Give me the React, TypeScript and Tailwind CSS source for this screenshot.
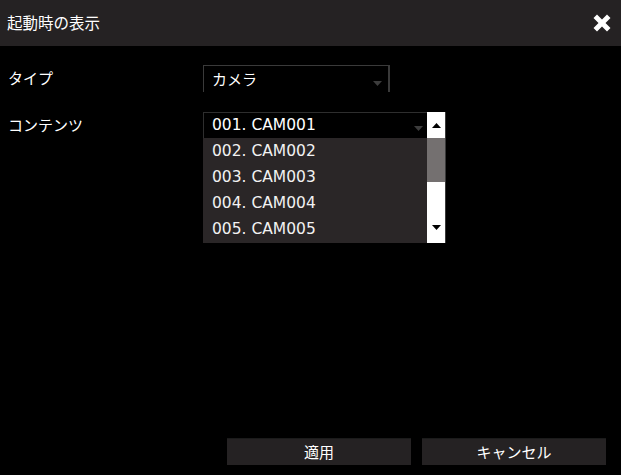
const jp = "font-['Noto_Sans_CJK_JP','Noto_Sans',sans-serif]";
const latin = "font-['DejaVu_Sans','Noto_Sans_CJK_JP',sans-serif]";

const ITEMS = ["002. CAM002", "003. CAM003", "004. CAM004", "005. CAM005"];

function Caret({ className }: { className: string }) {
  return (
    <svg width="9" height="5" viewBox="0 0 9 5" className={className}>
      <path d="M0 0h9L4.5 5z" fill="currentColor" />
    </svg>
  );
}

function CloseIcon() {
  return (
    <svg width="18" height="18" viewBox="0 0 18 18">
      <path
        d="M4 0.5 9 5.5 14 0.5 17.5 4 12.5 9 17.5 14 14 17.5 9 12.5 4 17.5 0.5 14 5.5 9 0.5 4z"
        fill="#fff"
      />
    </svg>
  );
}

export default function App() {
  return (
    <div className={`w-[621px] h-[475px] bg-black flex flex-col text-white ${jp}`}>
      <div className="h-[46px] bg-[#252223] flex items-center justify-between pl-[7px] pr-[10px]">
        <span className="text-[15.5px]">起動時の表示</span>
        <CloseIcon />
      </div>

      <div className="flex-1 flex flex-col pt-[19px] pl-[8px]">
        <div className="flex items-start">
          <div className="w-[195px] h-[27px] flex items-center text-[15px]">タイプ</div>
          <div className="w-[187px] h-[27px] border-t border-l border-r-2 border-[#3a3a3a] flex items-center justify-between pl-[8px] pr-[6px]">
            <span className="text-[15px]">カメラ</span>
            <Caret className="text-[#3c3c3c] mt-[9px]" />
          </div>
        </div>

        <div className="flex items-start mt-[20px]">
          <div className="w-[195px] h-[26px] flex items-center text-[15px]">コンテンツ</div>
          <div className="w-[243px] flex border-r border-[#3a3a3a]">
            <div className="w-[224px] flex flex-col">
              <div className="h-[26px] bg-black border-t border-l border-[#2e2e2e] flex items-center justify-between pl-[8px] pr-[4px]">
                <span className={`text-[15.5px] ${latin}`}>001. CAM001</span>
                <Caret className="text-[#3c3c3c] mt-[6px]" />
              </div>
              {ITEMS.map((item) => (
                <div key={item} className="h-[26px] bg-[#2a2627] flex items-center pl-[9px] pt-[1px]">
                  <span className={`text-[15.5px] ${latin} text-[#f2f2f2]`}>{item}</span>
                </div>
              ))}
              <div className="h-[1px] bg-[#2a2627]" />
            </div>
            <div className="w-[18px] flex flex-col bg-white">
              <div className="h-[26px] flex items-center justify-center">
                <Caret className="text-black rotate-180" />
              </div>
              <div className="h-[44px] bg-[#747070]" />
              <div className="flex-1 flex items-end justify-center pb-[13px]">
                <Caret className="text-black" />
              </div>
            </div>
          </div>
        </div>

        <div className="flex-1" />

        <div className="flex justify-end gap-[11px] pr-[15px] pb-[10px]">
          <button className="w-[184px] h-[27px] bg-[#252223] border-t border-[#1b1b1b] text-[15px] text-white flex items-center justify-center">
            適用
          </button>
          <button className="w-[184px] h-[27px] bg-[#252223] border-t border-[#1b1b1b] text-[15px] text-white flex items-center justify-center">
            キャンセル
          </button>
        </div>
      </div>
    </div>
  );
}
